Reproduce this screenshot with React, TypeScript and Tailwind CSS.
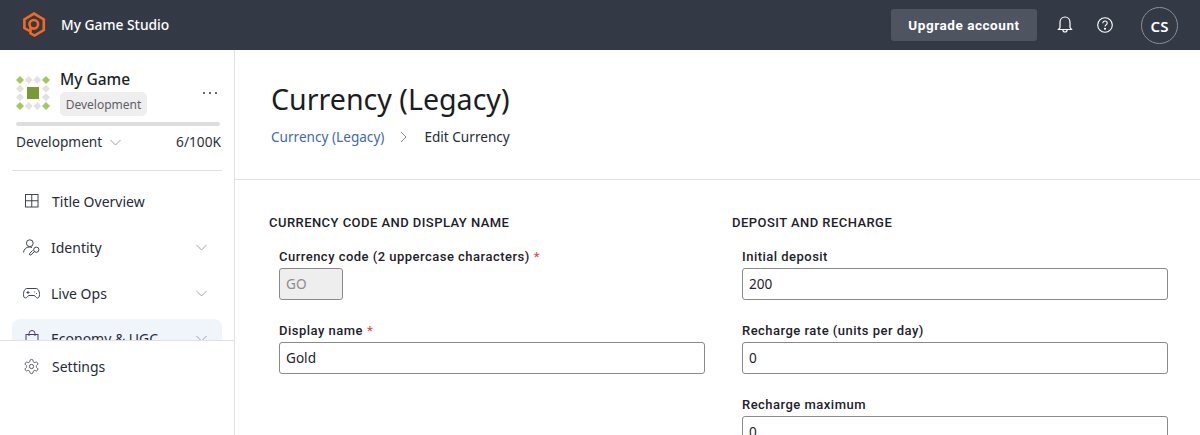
import React from "react";

const body = "font-['Noto_Sans','Open_Sans',sans-serif]";
const din = "font-['Roboto',sans-serif]";

function Chevron({ className = "" }: { className?: string }) {
  return (
    <svg width="11" height="7" viewBox="0 0 11 7" fill="none" className={className}>
      <path d="M.5 1l5 5 5-5" stroke="#a0a2a8" strokeWidth="1" />
    </svg>
  );
}

function Logo() {
  return (
    <svg width="24" height="26" viewBox="0 0 24 26" fill="none" stroke="#f26a21" strokeWidth="2.600" strokeLinejoin="miter">
      <path d="M7.500 19 L2.400 16 V7.400 L12 1.600 L21.800 7.400 V18 L12.500 23.600 L8.500 21.300 V15" />
      <circle cx="11.800" cy="12.300" r="4.300" />
    </svg>
  );
}

function GameIcon() {
  const gray = "#e2e2e2";
  const green = "#a4c761";
  const pts = [4, 12.67, 21.33, 30];
  const cells: [number, number, string][] = [];
  pts.forEach((y, r) =>
    pts.forEach((x, c) => {
      const edge = r === 0 || r === 3 || c === 0 || c === 3;
      if (!edge) return;
      const corner = (r === 0 || r === 3) && (c === 0 || c === 3);
      cells.push([x, y, corner ? green : gray]);
    })
  );
  return (
    <svg width="34" height="34" viewBox="0 0 34 34" className="shrink-0">
      {cells.map(([x, y, f], i) => (
        <polygon key={i} points={`${x},${y - 4} ${x + 4},${y} ${x},${y + 4} ${x - 4},${y}`} fill={f} />
      ))}
      <rect x="11" y="11" width="12" height="12" fill="#7a9a32" />
    </svg>
  );
}

function NavIcon({ kind }: { kind: string }) {
  const p = { fill: "none", stroke: "#3e4450", strokeWidth: 1 };
  if (kind === "grid")
    return (
      <svg {...p} width="14" height="14" viewBox="0 0 14 14">
        <rect x="0.5" y="0.5" width="12.500" height="12.500" />
        <path d="M6.750 .5V13M.5 6.750H13" />
      </svg>
    );
  if (kind === "identity")
    return (
      <svg {...p} width="17" height="17" viewBox="0 0 17 17">
        <circle cx="6.800" cy="4.200" r="3.400" />
        <path d="M.5 13.500c.3-3.400 2.800-5.500 5.900-5.500 1 0 1.900.2 2.600.6" />
        <circle cx="13.300" cy="10.700" r="2.600" />
        <path d="M11.500 12.500L7.800 16l-1.300 -.2.2-1.400 3-3" />
      </svg>
    );
  if (kind === "game")
    return (
      <svg {...p} width="17" height="13" viewBox="0 0 17 13">
        <path d="M4 1.500h9c2 0 3.500 2.400 3.500 6 0 2.200-.7 3.500-2 3.500-1.500 0-2.200-2.500-3.500-2.500H6C4.700 8.500 4 11 2.500 11 1.200 11 .5 9.700 .5 7.500c0-3.600 1.500-6 3.500-6z" />
        <path d="M3.500 5.500h3M5 4v3M11 5h.8M13 6.500h.8" />
      </svg>
    );
  if (kind === "bag")
    return (
      <svg width="14" height="16" viewBox="0 0 14 16" fill="none" stroke="#4b3a6b" strokeWidth="1">
        <rect x="1" y="4.500" width="12" height="11" />
        <path d="M4 6V3.500a3 3 0 0 1 6 0V6" />
      </svg>
    );
  return (
    <svg width="17" height="17" viewBox="0 0 24 24" fill="none" stroke="#4a505b" strokeWidth="1.300">
      <path d="M12.220 2h-.44a2 2 0 0 0-2 2v.18a2 2 0 0 1-1 1.730l-.43.250a2 2 0 0 1-2 0l-.15-.08a2 2 0 0 0-2.730.730l-.22.380a2 2 0 0 0 .73 2.730l.15.100a2 2 0 0 1 1 1.720v.510a2 2 0 0 1-1 1.740l-.15.090a2 2 0 0 0-.73 2.730l.22.380a2 2 0 0 0 2.730.730l.15-.08a2 2 0 0 1 2 0l.43.250a2 2 0 0 1 1 1.730V20a2 2 0 0 0 2 2h.44a2 2 0 0 0 2-2v-.18a2 2 0 0 1 1-1.730l.43-.250a2 2 0 0 1 2 0l.15.080a2 2 0 0 0 2.730-.730l.22-.390a2 2 0 0 0-.73-2.730l-.15-.080a2 2 0 0 1-1-1.740v-.500a2 2 0 0 1 1-1.740l.15-.090a2 2 0 0 0 .73-2.730l-.22-.380a2 2 0 0 0-2.730-.730l-.15.080a2 2 0 0 1-2 0l-.43-.250a2 2 0 0 1-1-1.730V4a2 2 0 0 0-2-2z" />
      <circle cx="12" cy="12" r="3" />
    </svg>
  );
}

function NavRow({ kind, label, chevron, active, wide }: { kind: string; label: string; chevron?: boolean; active?: boolean; wide?: boolean }) {
  return (
    <div className={`mx-3 flex h-[40px] items-center rounded-lg pl-[11px] pr-[15px] ${active ? "bg-[#f0f5fc] pb-[2px]" : ""}`}>
      <span className="flex w-[17px] shrink-0 justify-center"><NavIcon kind={kind} /></span>
      <span className={`${wide ? "ml-[12px]" : "ml-[11px]"} flex-1 text-[14px] text-[#262b35]`}>{label}</span>
      {chevron && <Chevron />}
    </div>
  );
}

function Field({ label, required, value, disabled }: { label: string; required?: boolean; value: string; disabled?: boolean }) {
  return (
    <div className="mb-[22px] pl-[10px]">
      <div className={`${din} h-[16px] pt-px text-[13px] leading-[16px] font-medium tracking-[0.48px] text-[#1d2129]`}>
        {label}
        {required && <span className="ml-[4px] text-[#d9534f]">*</span>}
      </div>
      <div
        className={`mt-[4px] flex h-[32px] items-center rounded-[3px] border border-[#8a8a8a] px-[6px] text-[13.600px] ${body} ${
          disabled ? "w-[64px] bg-[#eeeeee] text-[#8c8c8c]" : "w-[426px] bg-white text-[#1f232b]"
        }`}
      >
        {value}
      </div>
    </div>
  );
}

export default function App() {
  return (
    <div className={`${body} flex h-[435px] w-[1200px] flex-col overflow-hidden bg-white`}>
      <header className="flex h-[50px] shrink-0 items-center bg-[#343a45]">
        <div className="ml-[22px] flex"><Logo /></div>
        <span className="ml-[15px] text-[13.800px] font-medium text-white">My Game Studio</span>
        <button className={`${din} ml-auto h-[32px] w-[146px] rounded-[3px] bg-[#4f5461] text-[13.500px] font-bold tracking-[0.55px] text-white`}>
          Upgrade account
        </button>
        <svg className="ml-[20px] -mt-px" width="16" height="17" viewBox="0 0 16 17" fill="none" stroke="#fff" strokeWidth="1.200">
          <path d="M1.500 13.500h13l-1.500-2V6.500C13 3.500 11 1 8 1S3 3.500 3 6.500v5z" />
          <path d="M6 14c0 1.200.9 2 2 2s2-.8 2-2" />
        </svg>
        <svg className="ml-[24px] -mt-px" width="16" height="16" viewBox="0 0 16 16" fill="none" stroke="#fff" strokeWidth="1.100">
          <circle cx="8" cy="8" r="7.300" />
          <path d="M5.800 6.200c0-1.300 1-2.200 2.200-2.200s2.200.9 2.200 2c0 1.800-2.200 1.900-2.200 3.600" />
          <circle cx="8" cy="11.800" r=".5" fill="#fff" />
        </svg>
        <div className="ml-[28px] mr-[22px] mt-px flex h-[37px] w-[37px] items-center justify-center rounded-full border border-[#8b8f97] pt-[2px] text-[15px] font-semibold text-white">
          CS
        </div>
      </header>
      <div className="flex min-h-0 flex-1">
        <aside className="flex w-[235px] shrink-0 flex-col border-r border-[#e1e1e1]">
          <div className="min-h-0 flex-1 overflow-hidden">
            <div className="flex h-[72px] pl-4 pr-[17px] pt-[26px]">
              <GameIcon />
              <div className="ml-[10px] -mt-[8px]">
                <div className="text-[15.500px] leading-[22px] font-medium text-[#1b1f27]">My Game</div>
                <div className="mt-[2px] flex h-[24px] w-[87px] items-center justify-center rounded-[5px] bg-[#eeeeee] pt-px text-[12px] text-[#5e6068]">
                  Development
                </div>
              </div>
              <div className="ml-auto mt-[16px] flex h-[2px] gap-[4px]">
                <span className="h-[2px] w-[2px] rounded-full bg-[#343a45]" />
                <span className="h-[2px] w-[2px] rounded-full bg-[#343a45]" />
                <span className="h-[2px] w-[2px] rounded-full bg-[#343a45]" />
              </div>
            </div>
            <div className="mx-4 h-[4px] w-[204px] rounded-full bg-[#dddddd]" />
            <div className="mt-[6px] flex h-[20px] items-center px-4 text-[13.700px] text-[#2b303a]">
              <span>Development</span>
              <Chevron className="ml-[8px]" />
              <span className="ml-auto -mr-[3px]">6/100K</span>
            </div>
            <div className="mx-3 mt-[18px] h-px bg-[#e1e1e1]" />
            <div className="mt-[10px] flex flex-col gap-[6px]">
              <NavRow kind="grid" label="Title Overview" wide />
              <NavRow kind="identity" label="Identity" chevron />
              <NavRow kind="game" label="Live Ops" chevron />
              <NavRow kind="bag" label="Economy & UGC" chevron active />
            </div>
          </div>
          <div className="flex h-[95px] shrink-0 border-t border-[#e1e1e1] pt-[6px]">
            <div className="flex h-[38px] w-full items-center pl-[23px]">
              <NavIcon kind="gear" />
              <span className="ml-[12px] text-[14px] text-[#262b35]">Settings</span>
            </div>
          </div>
        </aside>
        <main className="min-w-0 flex-1 overflow-hidden">
          <div className="h-[130px] border-b border-[#e1e1e1] pl-[36px] pt-[27px]">
            <h1 className="text-[28.600px] leading-[44px] text-[#1a1d24]">Currency (Legacy)</h1>
            <div className="mt-[4px] flex h-[24px] items-center text-[13.600px]">
              <span className="text-[#3f68b5]">Currency (Legacy)</span>
              <svg className="ml-[16px]" width="8" height="12" viewBox="0 0 8 12" fill="none"><path d="M1 1l5 5-5 5" stroke="#8a8c92" /></svg>
              <span className="ml-[16px] text-[#262b35]">Edit Currency</span>
            </div>
          </div>
          <div className="flex pl-[34px] pt-[35px]">
            <section className="w-[463px]">
              <h2 className={`${din} mb-[17px] h-[16px] text-[13px] leading-[16px] font-medium tracking-[0.45px] text-[#1d2129]`}>CURRENCY CODE AND DISPLAY NAME</h2>
              <Field label="Currency code (2 uppercase characters)" required value="GO" disabled />
              <Field label="Display name" required value="Gold" />
            </section>
            <section className="w-[463px]">
              <h2 className={`${din} mb-[17px] h-[16px] text-[13px] leading-[16px] font-medium tracking-[0.45px] text-[#1d2129]`}>DEPOSIT AND RECHARGE</h2>
              <Field label="Initial deposit" value="200" />
              <Field label="Recharge rate (units per day)" value="0" />
              <Field label="Recharge maximum" value="0" />
            </section>
          </div>
        </main>
      </div>
    </div>
  );
}
